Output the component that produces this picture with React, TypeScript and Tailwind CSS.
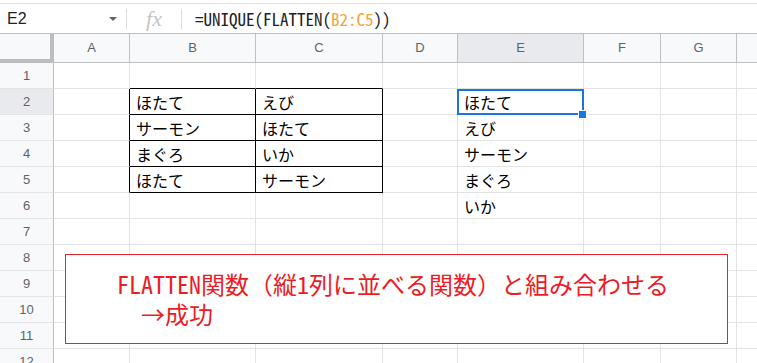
import React from "react";

const cols = [
  { key: "A", w: "w-[76px]" },
  { key: "B", w: "w-[126px]" },
  { key: "C", w: "w-[127px]" },
  { key: "D", w: "w-[75px]" },
  { key: "E", w: "w-[126px]" },
  { key: "F", w: "w-[77px]" },
  { key: "G", w: "w-[76px]" },
  { key: "H", w: "w-[76px]" },
];

const data: Record<string, string> = {
  B2: "ほたて",
  C2: "えび",
  B3: "サーモン",
  C3: "ほたて",
  B4: "まぐろ",
  C4: "いか",
  B5: "ほたて",
  C5: "サーモン",
  E2: "ほたて",
  E3: "えび",
  E4: "サーモン",
  E5: "まぐろ",
  E6: "いか",
};

const rows = [1, 2, 3, 4, 5, 6, 7, 8, 9, 10, 11, 12];

const jp = "font-['Noto_Sans_CJK_JP',sans-serif]";
const mono = "font-['Noto_Sans_Mono_CJK_JP','Noto_Sans_CJK_JP',monospace]";

function Cell({ col, row, w }: { col: string; row: number; w: string }) {
  const id = col + row;
  const inTable = (col === "B" || col === "C") && row >= 2 && row <= 5;
  const rightBlack = inTable || (col === "A" && row >= 2 && row <= 5);
  const bottomBlack = (col === "B" || col === "C") && row >= 1 && row <= 5;
  return (
    <div
      className={`relative flex h-[26px] shrink-0 items-center border-r border-b pl-[6px] text-[16px] text-black ${w} ${
        rightBlack ? "border-r-black" : "border-r-[#e2e3e3]"
      } ${bottomBlack ? "border-b-black" : "border-b-[#e2e3e3]"} ${jp} ${id === "E2" ? "z-10" : ""}`}
    >
      <span className="whitespace-nowrap">{data[id]}</span>
      {id === "E2" && (
        <div className="absolute inset-x-[-1px] top-0 bottom-[-1px] border-2 border-[#1a73e8]">
          <div className="absolute right-[-5px] bottom-[-6px] h-[9px] w-[9px] border border-white bg-[#1a73e8]" />
        </div>
      )}
    </div>
  );
}

export default function App() {
  return (
    <div className="relative h-[363px] w-[757px] overflow-hidden bg-white font-['Liberation_Sans',Arial,sans-serif]">
      {/* formula bar */}
      <div className="pt-[3px]">
        <div className="flex h-[30px] items-center border-t border-[#e0e0e0]">
          <div className="flex w-[126px] items-center pl-[7px] pr-[9px] text-[16px] text-[#202124]">
            <span>E2</span>
            <span className="ml-auto mt-[1px] h-0 w-0 border-x-[4px] border-t-[4px] border-x-transparent border-t-[#5f6368]" />
          </div>
          <div className="h-[20px] w-px bg-[#dadce0]" />
          <div className="flex w-[54px] justify-center font-['Liberation_Serif',serif] text-[22px] italic leading-none text-[#c4c4c4]">
            fx
          </div>
          <div className="h-[20px] w-px bg-[#dadce0]" />
          <div className={`pl-[13px] text-[17px] text-[#202124] ${mono}`}>
            =UNIQUE(FLATTEN(<span className="text-[#f4a33a]">B2:C5</span>))
          </div>
        </div>
      </div>

      {/* column header */}
      <div className="flex h-[30px] border-t border-b border-[#c0c0c0] bg-[#f8f9fa] text-[13px] text-[#5f6368]">
        <div className="h-[29px] w-[54px] shrink-0 border-r-4 border-b-4 border-[#bdbdbd]" />
        {cols.map((c) => (
          <div
            key={c.key}
            className={`flex shrink-0 items-center justify-center border-r border-[#c0c0c0] ${c.w} ${
              c.key === "E" ? "bg-[#e8eaed]" : ""
            }`}
          >
            {c.key}
          </div>
        ))}
      </div>

      {/* rows */}
      {rows.map((r) => (
        <div key={r} className="flex">
          <div
            className={`flex h-[26px] w-[54px] shrink-0 items-center justify-center border-r border-b border-r-[#c0c0c0] border-b-[#e2e3e3] text-[13px] text-[#5f6368] ${
              r === 2 ? "bg-[#e8eaed]" : "bg-[#f8f9fa]"
            }`}
          >
            {r}
          </div>
          {cols.map((c) => (
            <Cell key={c.key} col={c.key} row={r} w={c.w} />
          ))}
        </div>
      ))}

      {/* callout shape over the grid */}
      <div className="absolute top-[254px] left-[65px] z-20 h-[90px] w-[663px] border border-[#e8242b] bg-white pt-[14px] pl-[51px] text-[24px] leading-[30px] text-[#ec1c24]">
        <div className={mono}>FLATTEN関数（縦1列に並べる関数）と組み合わせる</div>
        <div className={`pl-[24px] ${mono}`}>→成功</div>
      </div>
    </div>
  );
}
